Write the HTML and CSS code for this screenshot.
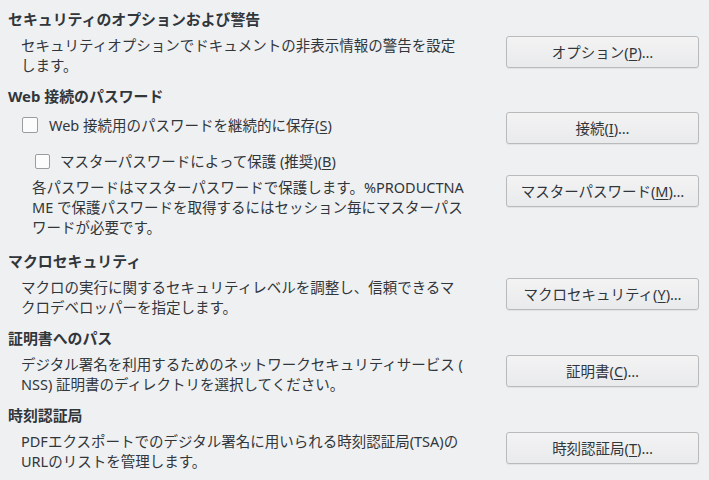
FILE: index.html
```html
<!DOCTYPE html>
<html lang="ja">
<head>
<meta charset="utf-8">
<link rel="stylesheet" href="styles.css">
</head>
<body>
<div class="page">
  <section class="sec sec-first">
    <div class="head">セキュリティのオプションおよび警告</div>
    <div class="row">
      <div class="text">セキュリティオプションでドキュメントの非表示情報の警告を設定<br>します。</div>
      <button class="btn">オプション(<u>P</u>)…</button>
    </div>
  </section>

  <section class="sec">
    <div class="head">Web 接続のパスワード</div>
    <div class="row row-cb">
      <label class="cb cb-1"><span class="box"></span>Web 接続用のパスワードを継続的に保存(<u>S</u>)</label>
      <button class="btn">接続(<u>I</u>)…</button>
    </div>
    <div class="row row-cb2">
      <label class="cb cb-2"><span class="box"></span>マスターパスワードによって保護 (推奨)(<u>B</u>)</label>
    </div>
    <div class="row row-master">
      <div class="text text-deep">各パスワードはマスターパスワードで保護します。%PRODUCTNA<br>ME で保護パスワードを取得するにはセッション毎にマスターパス<br>ワードが必要です。</div>
      <button class="btn btn-up">マスターパスワード(<u>M</u>)…</button>
    </div>
  </section>

  <section class="sec sec-after3">
    <div class="head">マクロセキュリティ</div>
    <div class="row">
      <div class="text">マクロの実行に関するセキュリティレベルを調整し、信頼できるマ<br>クロデベロッパーを指定します。</div>
      <button class="btn">マクロセキュリティ(<u>Y</u>)…</button>
    </div>
  </section>

  <section class="sec">
    <div class="head">証明書へのパス</div>
    <div class="row">
      <div class="text">デジタル署名を利用するためのネットワークセキュリティサービス (<br>NSS) 証明書のディレクトリを選択してください。</div>
      <button class="btn">証明書(<u>C</u>)…</button>
    </div>
  </section>

  <section class="sec">
    <div class="head">時刻認証局</div>
    <div class="row">
      <div class="text">PDFエクスポートでのデジタル署名に用いられる時刻認証局(TSA)の<br>URLのリストを管理します。</div>
      <button class="btn">時刻認証局(<u>T</u>)…</button>
    </div>
  </section>
</div>
</body>
</html>
```

FILE: styles.css
```css
html, body {
  margin: 0;
  padding: 0;
  background: #eff0f1;
}
body {
  font-family: "Noto Sans", "Noto Sans CJK JP", sans-serif;
  color: #31363b;
  font-size: 14.5px;
  line-height: 20px;
}
.page {
  padding: 9px 10px 0 8px;
  display: flex;
  flex-direction: column;
}
.sec {
  margin-top: 11px;
}
.sec-first {
  margin-top: 0;
}
.sec-after3 {
  margin-top: 14px;
}
.head {
  font-weight: bold;
  font-size: 14.9px;
  line-height: 20px;
  white-space: nowrap;
}
.row {
  display: flex;
  align-items: flex-start;
  margin-top: 6px;
}
.text {
  flex: 1;
  padding-left: 13px;
  white-space: nowrap;
}
.text-deep {
  padding-left: 24px;
  margin-top: 2px;
}
.btn {
  flex: none;
  width: 193px;
  height: 32px;
  margin-top: 1px;
  padding: 0;
  font: inherit;
  color: #31363b;
  background: linear-gradient(#f3f3f4, #e9eaeb);
  border: 1px solid #b8babc;
  border-radius: 3px;
  box-shadow: 0 1px 1px rgba(0,0,0,0.06);
  text-align: center;
}
.btn-up {
  margin-top: 0;
}
.btn u {
  text-decoration-thickness: 1px;
  text-underline-offset: 2px;
}
.cb {
  flex: 1;
  display: flex;
  align-items: center;
  white-space: nowrap;
}
.cb u {
  text-decoration-thickness: 1px;
  text-underline-offset: 2px;
}
.box {
  box-sizing: border-box;
  width: 16px;
  height: 16px;
  border: 1px solid #9a9da0;
  border-radius: 2px;
  background: #fcfcfc;
  margin-right: 11px;
}
.row-cb .cb {
  margin-top: 3px;
  padding-left: 14px;
}
.row-cb .btn {
  margin-top: 0;
}
.row-cb2 {
  margin-top: 7px;
}
.cb-2 {
  padding-left: 27px;
}
.cb-2 .box {
  width: 15px;
  height: 15px;
  margin-right: 10px;
}
.row-master {
  margin-top: 4px;
}
```
